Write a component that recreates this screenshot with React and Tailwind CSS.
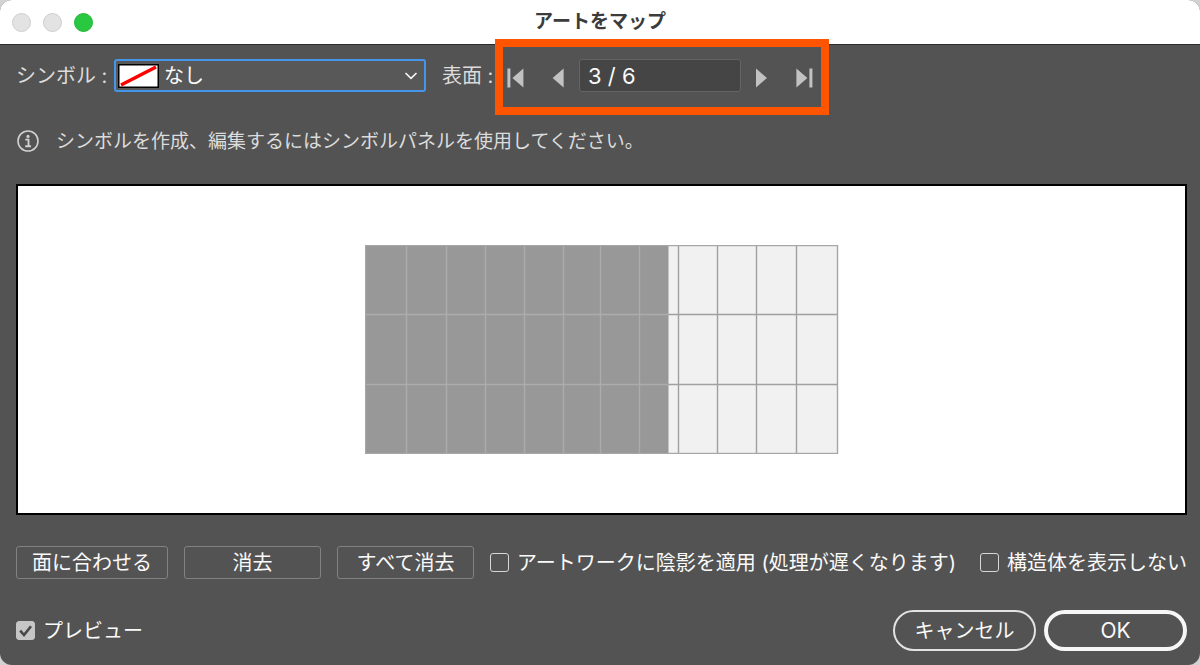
import React, { useState } from 'react';

const SURFACE_COUNT = 6;

// Grid line positions inside the 474x209 surface drawing
const SHADED_COLS = [41.5, 81.5, 120.5, 159.5, 198.5, 235.5, 274.5];
const LIGHT_COLS = [313.5, 352.5, 391.5, 431.5];
const ROWS = [69.5, 139.5];

function Checkbox({ id, label, checked, onChange }) {
  return (
    <div className="flex items-center gap-2">
      <span className="grid place-items-center">
        <input
          id={id}
          type="checkbox"
          checked={checked}
          onChange={(e) => onChange(e.target.checked)}
          className="col-start-1 row-start-1 appearance-none w-[19px] h-[19px] rounded-[3px] border border-[#d6d6d6] checked:border-[#c6c6c6] checked:bg-[#c6c6c6]"
        />
        {checked && (
          <svg viewBox="0 0 19 19" className="col-start-1 row-start-1 w-[19px] h-[19px] pointer-events-none" aria-hidden="true">
            <path d="M4.2 9.6 L8 14 L15 5.2" fill="none" stroke="#484848" strokeWidth="2.6" />
          </svg>
        )}
      </span>
      <label htmlFor={id} className="whitespace-nowrap">{label}</label>
    </div>
  );
}

function PagerButton({ label, onClick, children }) {
  return (
    <button type="button" aria-label={label} onClick={onClick} className="w-[42px] h-[33px] pt-1 flex items-center justify-center">
      <svg viewBox="0 0 18 20" className="w-[18px] h-5 fill-[#c2c2c2]" aria-hidden="true">
        {children}
      </svg>
    </button>
  );
}

function PanelButton({ className, children }) {
  return (
    <button type="button" className={`h-[33px] shrink-0 rounded-[3px] border border-[#828282] whitespace-nowrap ${className}`}>
      {children}
    </button>
  );
}

function SurfacePreview() {
  return (
    <svg viewBox="0 0 474 209" className="w-[474px] h-[209px]" role="img" aria-label="表面">
      <rect x="0.5" y="0.5" width="472" height="208" fill="#f1f1f1" />
      <rect x="0.5" y="0.5" width="303" height="208" fill="#989898" />
      <g stroke="#acacac" strokeWidth="1.4">
        {SHADED_COLS.map((x) => (
          <line key={x} x1={x} y1="0" x2={x} y2="209" />
        ))}
        {ROWS.map((y) => (
          <line key={y} x1="0" y1={y} x2="303" y2={y} />
        ))}
      </g>
      <g stroke="#a0a0a0" strokeWidth="1.4">
        {LIGHT_COLS.map((x) => (
          <line key={x} x1={x} y1="0" x2={x} y2="209" />
        ))}
        {ROWS.map((y) => (
          <line key={y} x1="303" y1={y} x2="473" y2={y} />
        ))}
      </g>
      <rect x="0.5" y="0.5" width="472" height="208" fill="none" stroke="#a6a6a6" strokeWidth="1.4" />
    </svg>
  );
}

export default function App() {
  const [symbol, setSymbol] = useState('none');
  const [surface, setSurface] = useState(3);
  const [shade, setShade] = useState(false);
  const [hideGeometry, setHideGeometry] = useState(false);
  const [preview, setPreview] = useState(true);

  return (
    <div className="min-h-screen flex bg-[#d2d2d2] font-['Inter','Noto_Sans_CJK_JP',sans-serif] text-[20px] leading-6 text-[#fafafa]">
      <div className="flex-1 flex flex-col rounded-[12px] overflow-hidden bg-[#535353]">
        {/* Title bar */}
        <header className="h-[45px] grid grid-cols-[1fr_auto_1fr] items-center px-3 bg-white border-b border-[#2c2c2c]">
          <div className="flex gap-3">
            <span className="w-[19px] h-[19px] rounded-full bg-[#e3e3e3] border border-[#cecece]"></span>
            <span className="w-[19px] h-[19px] rounded-full bg-[#e3e3e3] border border-[#cecece]"></span>
            <span className="w-[19px] h-[19px] rounded-full bg-[#28c840] border border-[#22b838]"></span>
          </div>
          <h1 className="text-[19px] font-bold text-[#3c3c3c]">アートをマップ</h1>
        </header>

        <main className="flex-1 flex flex-col py-[14px] pl-4 pr-[13px]">
          {/* Symbol and surface pickers */}
          <div className="flex items-center">
            <label htmlFor="symbol" className="w-[98px] text-[#dcdcdc] whitespace-nowrap">シンボル :</label>
            <div className="relative w-[312px]">
              <select
                id="symbol"
                value={symbol}
                onChange={(e) => setSymbol(e.target.value)}
                className="appearance-none w-full h-[33px] pl-12 rounded-[3px] border-2 border-[#4596ea] bg-[#585858] outline-none"
              >
                <option value="none">なし</option>
              </select>
              <svg viewBox="0 0 41 24" className="absolute left-1 top-[5px] w-[41px] h-6 pointer-events-none" aria-hidden="true">
                <rect x="0.75" y="0.75" width="39.5" height="22.5" fill="#fff" stroke="#000" strokeWidth="1.5" />
                <path d="M3 21 L38 3" stroke="#ff0000" strokeWidth="3.4" />
              </svg>
              <svg viewBox="0 0 14 10" className="absolute right-2 top-3 w-[14px] h-[10px] pointer-events-none" aria-hidden="true">
                <path d="M1.5 2 L7 7.3 L12.5 2" fill="none" stroke="#f4f4f4" strokeWidth="1.7" />
              </svg>
            </div>
            <label htmlFor="surface" className="w-[53px] ml-4 text-[#dcdcdc] whitespace-nowrap">表面 :</label>
            <div className="relative flex items-center">
              <PagerButton label="最初の表面" onClick={() => setSurface(1)}>
                <path d="M0.4 0.5 H3.4 V19.5 H0.4 Z M16.4 0.5 V19.5 L5.4 10 Z" />
              </PagerButton>
              <PagerButton label="前の表面" onClick={() => setSurface(Math.max(1, surface - 1))}>
                <path d="M14.6 0.5 V19.5 L3.6 10 Z" />
              </PagerButton>
              <input
                id="surface"
                type="text"
                readOnly
                value={`${surface} / ${SURFACE_COUNT}`}
                className="w-[162px] h-[33px] pl-2 rounded-[3px] border border-[#646464] bg-[#454545] text-[22px] outline-none"
              />
              <PagerButton label="次の表面" onClick={() => setSurface(Math.min(SURFACE_COUNT, surface + 1))}>
                <path d="M3 0.5 V19.5 L14 10 Z" />
              </PagerButton>
              <PagerButton label="最後の表面" onClick={() => setSurface(SURFACE_COUNT)}>
                <path d="M1.4 0.5 V19.5 L12.4 10 Z M14.4 0.5 H17.4 V19.5 H14.4 Z" />
              </PagerButton>
              {/* Highlight around the pager */}
              <div className="absolute left-0 -right-1 -top-5 -bottom-[23px] border-8 border-[#ff5500] pointer-events-none"></div>
            </div>
          </div>

          <div className="mt-9 flex items-center gap-4 text-[19px] text-[#dcdcdc]">
            <svg viewBox="0 0 24 24" className="w-6 h-6" aria-hidden="true">
              <circle cx="12" cy="12" r="10" fill="none" stroke="#d0d0d0" strokeWidth="1.6" />
              <circle cx="12" cy="7.4" r="1.6" fill="#d0d0d0" />
              <path d="M9.3 10.6 H12.5 V17 M9.2 17.2 H15" fill="none" stroke="#d0d0d0" strokeWidth="1.9" />
            </svg>
            <p className="pt-0.5">シンボルを作成、編集するにはシンボルパネルを使用してください。</p>
          </div>

          <div className="mt-[30px] flex-1 flex items-center justify-center bg-white border-2 border-black">
            <SurfacePreview />
          </div>

          <div className="mt-[31px] flex items-center gap-4">
            <PanelButton className="w-[152px]">面に合わせる</PanelButton>
            <PanelButton className="w-[137px]">消去</PanelButton>
            <PanelButton className="w-[137px]">すべて消去</PanelButton>
            <Checkbox id="shade" label="アートワークに陰影を適用 (処理が遅くなります)" checked={shade} onChange={setShade} />
            <div className="ml-auto">
              <Checkbox id="hide-geometry" label="構造体を表示しない" checked={hideGeometry} onChange={setHideGeometry} />
            </div>
          </div>

          <div className="mt-[31px] flex items-center justify-between">
            <Checkbox id="preview" label="プレビュー" checked={preview} onChange={setPreview} />
            <div className="flex gap-2">
              <button type="button" className="w-[143px] h-[41px] rounded-full border-2 border-[#e2e2e2]">キャンセル</button>
              <button type="button" className="w-[143px] h-[41px] rounded-full border-4 border-[#f6f6f6] text-[21px]">OK</button>
            </div>
          </div>
        </main>
      </div>
    </div>
  );
}
